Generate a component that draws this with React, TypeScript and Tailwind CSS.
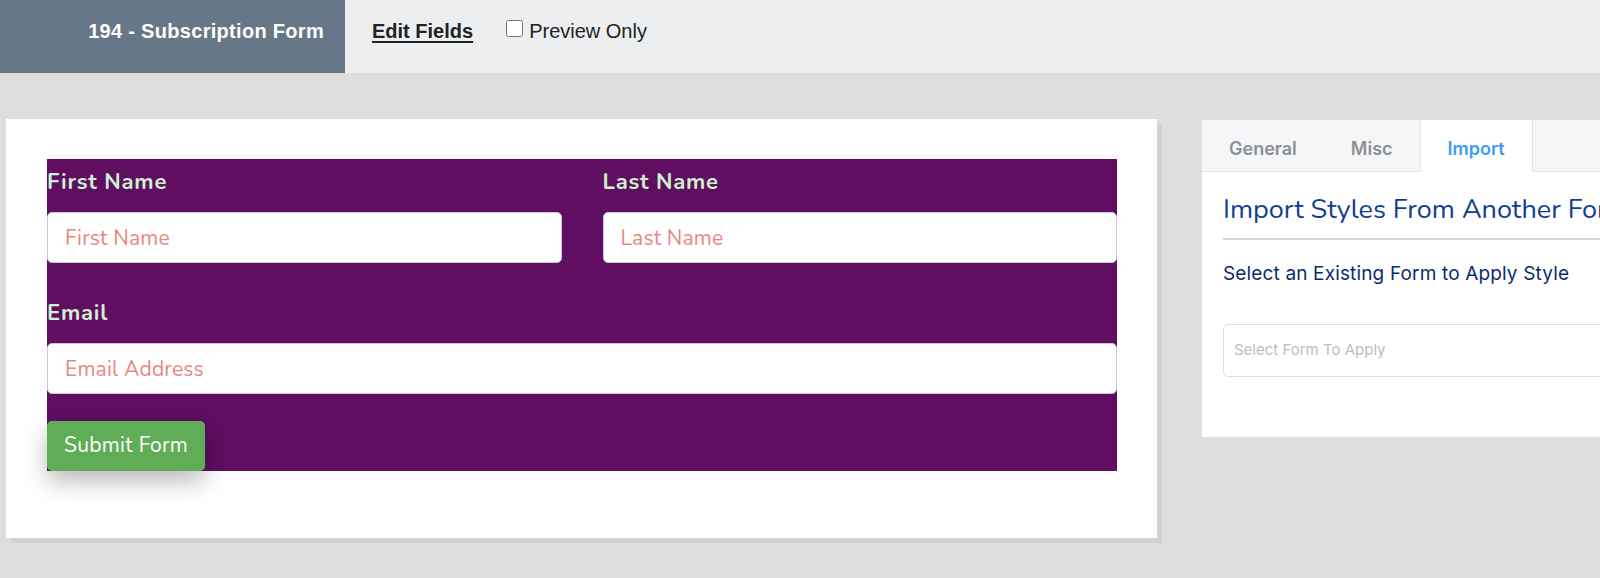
import { useState } from "react";

const nunito = { fontFamily: "Nunito, Lato, 'Open Sans', sans-serif" };

function Field({ label, placeholder }: { label: string; placeholder: string }) {
  return (
    <div className="flex flex-col">
      <label className="pt-[8px] text-[22px] leading-[30px] font-bold text-[#d0f1cf] tracking-[0.8px]">
        {label}
      </label>
      <input
        placeholder={placeholder}
        className="mt-[15px] h-[51px] w-full rounded-[5px] border border-[#cbc7de] bg-white px-[17px] text-[21px] tracking-[0.2px] outline-none placeholder:text-[#e98683]"
      />
    </div>
  );
}

export default function App() {
  const [preview, setPreview] = useState<boolean>(false);
  const [tab, setTab] = useState<string>("Import");

  return (
    <div
      className="w-[1600px] h-[578px] overflow-hidden bg-[#dedede]"
      style={{ fontFamily: "'Liberation Sans', Arial, sans-serif" }}
    >
      <header className="flex h-[73px] bg-[#eceef0]">
        <div className="flex w-[345px] justify-end bg-[#667788] pt-[19px] pr-[21px] text-[20px] leading-[24px] font-bold tracking-[0.3px] text-white">
          194 - Subscription Form
        </div>
        <a
          href="#"
          className="ml-[27px] pt-[19px] text-[20px] leading-[24px] font-bold text-[#222] underline underline-offset-[3px]"
        >
          Edit Fields
        </a>
        <label className="ml-[33px] flex items-start pt-[19px] text-[20px] leading-[24px] text-[#222]">
          <input
            type="checkbox"
            checked={preview}
            onChange={() => setPreview(!preview)}
            className="mt-[1px] h-[17px] w-[17px]"
          />
          <span className="ml-[6px]">Preview Only</span>
        </label>
      </header>

      <div className="flex items-start pt-[46px]">
        {/* form preview card */}
        <div className="ml-[6px] h-[419px] w-[1151px] shrink-0 bg-white pt-[40px] pl-[41px] shadow-[5px_5px_0_#d1d1d1]">
          <div className="w-[1070px] bg-[#5f0e62]" style={nunito}>
            <div className="grid grid-cols-2 gap-x-[41px]">
              <Field label="First Name" placeholder="First Name" />
              <Field label="Last Name" placeholder="Last Name" />
            </div>
            <div className="mt-[27px]">
              <Field label="Email" placeholder="Email Address" />
            </div>
            <button className="mt-[27px] h-[50px] rounded-[5px] bg-[#5fad56] px-[17px] text-[21px] tracking-[0.3px] text-white shadow-[0_10px_24px_rgba(0,0,0,0.28)]">
              Submit Form
            </button>
          </div>
        </div>

        {/* style panel */}
        <div
          className="mt-[1px] ml-[45px] h-[317px] w-[460px] shrink-0 bg-white"
          style={{ fontFamily: "Inter, 'Noto Sans', sans-serif" }}
        >
          <div className="flex h-[52px] border-b border-[#e1e4e8] bg-[#f5f6f8]">
            {["General", "Misc", "Import"].map((t) => (
              <button
                key={t}
                onClick={() => setTab(t)}
                className={`-mb-px px-[27px] pt-[4px] text-[18px] font-semibold ${
                  tab === t
                    ? "border-x border-[#e1e4e8] bg-white text-[#3d9bf5]"
                    : "text-[#8b8f95]"
                }`}
              >
                {t}
              </button>
            ))}
          </div>
          <div className="px-[21px]">
            <h2
              className="mt-[22px] whitespace-nowrap text-[27px] leading-[32px] text-[#103e92]"
              style={nunito}
            >
              Import Styles From Another Form
            </h2>
            <div className="mt-[12px] h-[2px] w-full bg-[#cdd6e1]" />
            <p className="mt-[22px] text-[19px] leading-[24px] tracking-[0.15px] text-[#0b2c6e]">
              Select an Existing Form to Apply Style
            </p>
            <div className="mt-[38px] flex h-[53px] items-center rounded-[5px] border border-[#dcdee7] px-[10px] text-[15px] text-[#b9bdc9]">
              Select Form To Apply
            </div>
          </div>
        </div>
      </div>
    </div>
  );
}
